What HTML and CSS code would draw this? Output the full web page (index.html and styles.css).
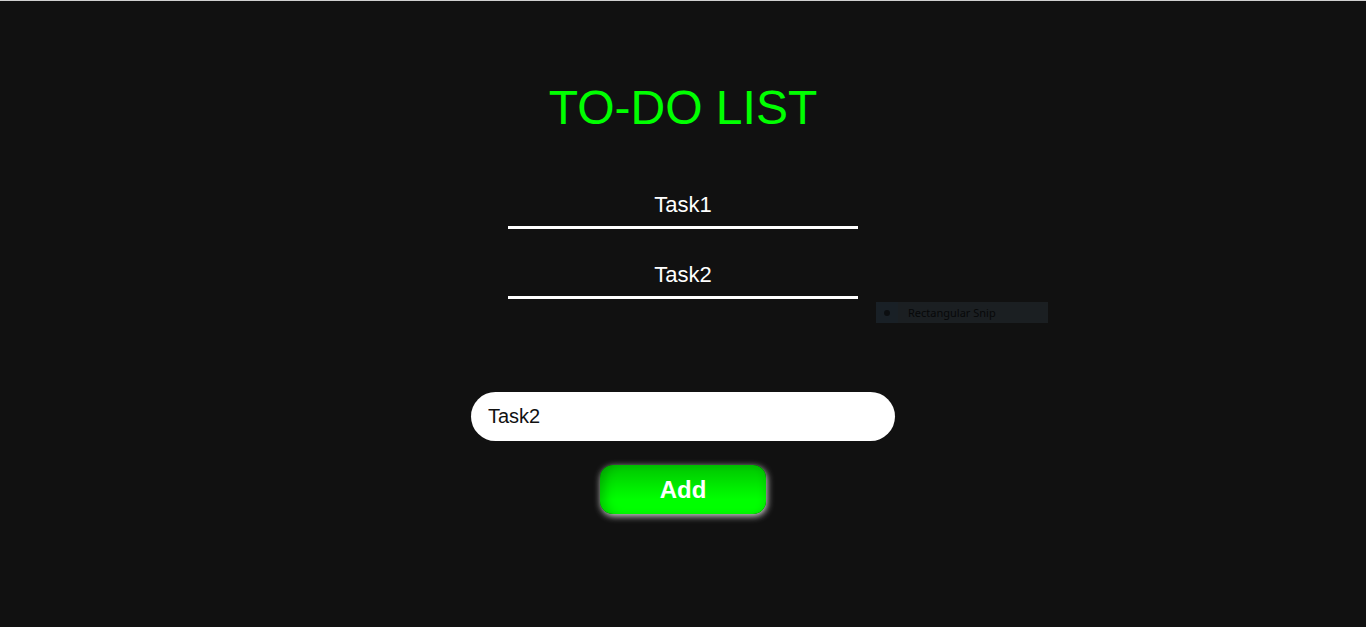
FILE: index.html
```html
<!DOCTYPE html>
<html lang="en">
<head>
<meta charset="utf-8">
<title>To-Do List</title>
<link rel="stylesheet" href="styles.css">
</head>
<body>
<main class="app">
  <h1 class="title">TO-DO LIST</h1>
  <ul class="tasks">
    <li class="task">Task1</li>
    <li class="task">Task2</li>
  </ul>
  <input class="task-input" type="text" value="Task2">
  <button class="add-btn" type="button">Add</button>
</main>
<div class="snip"><span class="snip-icon"><span class="snip-dot"></span></span><span class="snip-label">Rectangular Snip</span></div>
</body>
</html>
```

FILE: styles.css
```css
html, body {
  margin: 0;
  padding: 0;
  height: 100%;
}
body {
  background: #111111;
  border-top: 1px solid #d0d0d0;
  box-sizing: border-box;
  font-family: "Liberation Sans", Arial, sans-serif;
  overflow: hidden;
  position: relative;
}
.app {
  display: flex;
  flex-direction: column;
  align-items: center;
}
.title {
  margin: 79px 0 0;
  font-size: 48px;
  line-height: 55px;
  font-weight: normal;
  color: #00ff00;
}
.tasks {
  list-style: none;
  margin: 58px 0 0;
  padding: 0;
  display: flex;
  flex-direction: column;
  gap: 34px;
}
.task {
  width: 350px;
  text-align: center;
  color: #ffffff;
  font-size: 22px;
  line-height: 24px;
  padding-bottom: 9px;
  border-bottom: 3px solid #ffffff;
}
.task-input {
  margin-top: 93px;
  width: 424px;
  height: 49px;
  box-sizing: border-box;
  border: none;
  outline: none;
  border-radius: 25px;
  background: #ffffff;
  padding: 0 17px;
  font-family: "Liberation Sans", Arial, sans-serif;
  font-size: 20px;
  color: #111111;
}
.add-btn {
  margin-top: 24px;
  width: 166px;
  height: 49px;
  border: none;
  border-radius: 13px;
  background: linear-gradient(#00c400 0%, #00ec00 45%, #00ff00 70%);
  color: #ffffff;
  font-family: "Liberation Sans", Arial, sans-serif;
  font-weight: bold;
  font-size: 24px;
  box-shadow: inset 10px 0 12px -6px rgba(0, 0, 0, 0.25), inset -6px 0 10px -6px rgba(0, 0, 0, 0.15), 1px 2px 7px rgba(255, 255, 255, 0.85);
  cursor: pointer;
}
.snip {
  position: absolute;
  left: 876px;
  top: 301px;
  width: 172px;
  height: 21px;
  background: #1b1f22;
  display: flex;
  align-items: center;
}
.snip-icon {
  width: 22px;
  height: 21px;
  background: #192026;
  display: flex;
  align-items: center;
  justify-content: center;
}
.snip-dot {
  width: 6px;
  height: 6px;
  border-radius: 50%;
  background: #0c0e10;
}
.snip-label {
  margin-left: 10px;
  font-family: "Segoe UI", "Noto Sans", sans-serif;
  font-size: 11px;
  color: #070809;
}
```
